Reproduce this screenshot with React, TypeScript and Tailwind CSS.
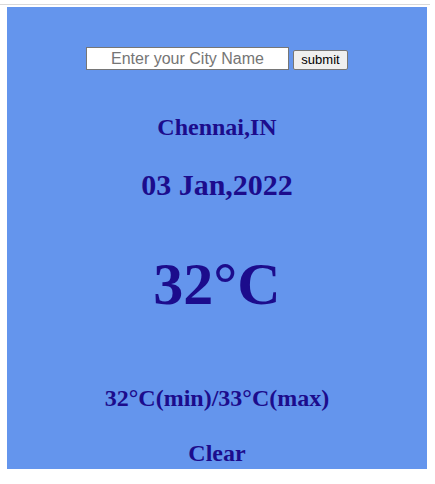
export default function App() {
  return (
    <div className="min-h-[484px] bg-white pt-[4px]">
      <div className="h-px w-[430px] bg-[#d9d9d9]" />
      <div className="ml-[7px] mt-[2px] flex h-[462px] w-[420px] flex-col items-center bg-[#6495ed] font-['Liberation_Serif',serif] font-bold text-[#1c0c8c]">
        <form
          className="mt-[40px] flex items-center gap-[4px]"
          onSubmit={(e) => e.preventDefault()}
        >
          <input
            type="text"
            placeholder="Enter your City Name"
            className="h-[23px] w-[203px] border border-[#767676] bg-white px-[2px] text-center font-['Liberation_Sans',sans-serif] text-[16px] font-normal text-black outline-none placeholder:text-[#757575]"
          />
          <button
            type="submit"
            className="mt-[2px] h-[20px] w-[55px] rounded-[2px] border border-[#767676] bg-[#efefef] font-['Liberation_Sans',sans-serif] text-[13px] leading-none font-normal text-black"
          >
            submit
          </button>
        </form>
        <h2 className="mt-[42px] text-[24px] leading-[30px]">Chennai,IN</h2>
        <h2 className="mt-[25px] text-[30px] leading-[36px]">03 Jan,2022</h2>
        <h1 className="mt-[46px] text-[60px] leading-[70px]">32°C</h1>
        <h2 className="mt-[64px] text-[24px] leading-[30px]">32°C(min)/33°C(max)</h2>
        <h2 className="mt-[25px] text-[24px] leading-[30px]">Clear</h2>
      </div>
    </div>
  );
}
